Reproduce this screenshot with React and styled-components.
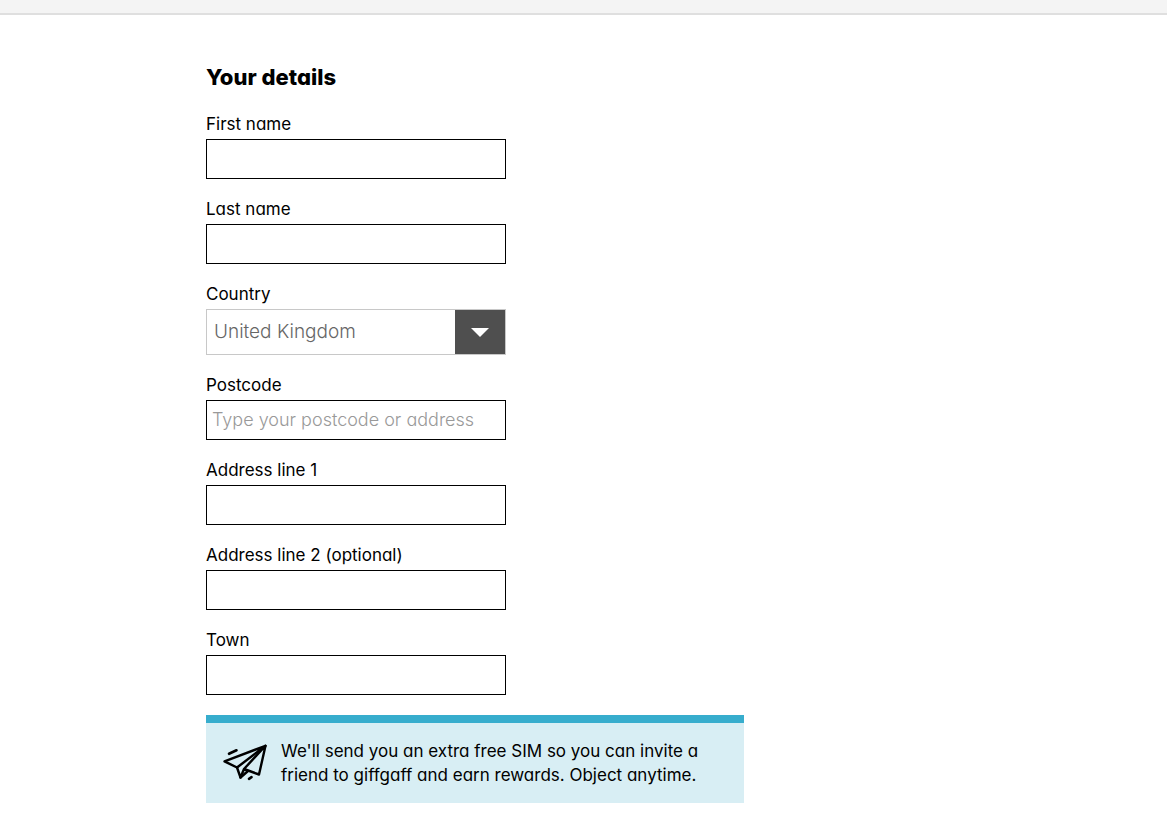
import React, { useState } from 'react';
import styled, { createGlobalStyle } from 'styled-components';

const Colors = {
  text: '#000',
  strip: '#f4f4f4',
  stripBorder: '#dfdfdf',
  selectBorder: '#c8c8c8',
  selectText: '#666',
  selectButton: '#4f4f4f',
  placeholder: '#999',
  noticeBg: '#d8eef4',
  noticeBar: '#37adcd',
};

const GlobalStyle = createGlobalStyle`
  *,
  *::before,
  *::after {
    box-sizing: border-box;
  }

  body {
    margin: 0;
    background-color: #fff;
    color: ${Colors.text};
    font-family: Inter, 'Liberation Sans', sans-serif;
    font-feature-settings: 'cv11';
    font-size: 17px;
    font-weight: 400;
    line-height: 24px;
  }
`;

const TopStrip = styled.header`
  height: 15px;
  background-color: ${Colors.strip};
  border-bottom: 2px solid ${Colors.stripBorder};
`;

const Page = styled.main`
  max-width: 755px;
  margin: 0 auto;
  padding: 48px 0 16px;
`;

const Title = styled.h1`
  margin: 0 0 21px;
  font-size: 22px;
  line-height: 28px;
  font-weight: 800;
`;

const Form = styled.form`
  display: flex;
  flex-direction: column;
  gap: 18px;
`;

const Field = styled.div`
  display: flex;
  flex-direction: column;
  gap: 3px;
  width: 100%;
  max-width: 300px;
`;

const Label = styled.label`
  align-self: flex-start;
`;

const TextInput = styled.input`
  width: 100%;
  height: 40px;
  padding: 0 5px 2px;
  border: 1px solid ${Colors.text};
  border-radius: 0;
  background-color: #fff;
  color: ${Colors.text};
  font-family: inherit;
  font-feature-settings: inherit;
  font-size: 18px;
  font-weight: 300;

  &::placeholder {
    color: ${Colors.placeholder};
    opacity: 1;
  }
`;

const SelectBox = styled.div`
  display: grid;
  grid-template-columns: 1fr 50px;
  height: 46px;
  border: 1px solid ${Colors.selectBorder};
`;

const Select = styled.select`
  grid-area: 1 / 1 / 2 / 3;
  appearance: none;
  width: 100%;
  padding: 0 58px 2px 7px;
  border: none;
  border-radius: 0;
  background-color: #fff;
  color: ${Colors.selectText};
  font-family: inherit;
  font-feature-settings: inherit;
  font-size: 19px;
  font-weight: 300;
`;

const SelectArrow = styled.span`
  grid-area: 1 / 2;
  display: flex;
  align-items: center;
  justify-content: center;
  background-color: ${Colors.selectButton};
  pointer-events: none;
  z-index: 1;
`;

const Notice = styled.aside`
  display: flex;
  align-items: flex-start;
  gap: 14px;
  max-width: 538px;
  margin-top: 20px;
  padding: 16px 40px 16px 17px;
  border-top: 8px solid ${Colors.noticeBar};
  background-color: ${Colors.noticeBg};

  svg {
    flex-shrink: 0;
    margin-top: 4px;
  }

  p {
    margin: 0;
  }
`;

const PaperPlane = () => (
  <svg
    width="44"
    height="38"
    viewBox="0 0 44 38"
    fill="none"
    stroke="#000"
    strokeWidth="2.4"
    strokeLinecap="round"
    strokeLinejoin="round"
    aria-hidden="true"
  >
    <path d="M42.5 2.8 L1.5 18.3 L14 24.5 Z" />
    <path d="M14 24.5 L17.5 34.5 L21 26 L42.5 2.8 L36 31.5 L21 26" />
    <path d="M17.5 34.5 L25 28" />
    <path d="M6 10.8 L13.5 7.3" strokeWidth="2.6" />
    <path d="M26 35.8 L28.5 34.2" strokeWidth="2.6" />
  </svg>
);

const fields = [
  { id: 'firstName', label: 'First name' },
  { id: 'lastName', label: 'Last name' },
  { id: 'country', label: 'Country', options: ['United Kingdom'] },
  { id: 'postcode', label: 'Postcode', placeholder: 'Type your postcode or address' },
  { id: 'address1', label: 'Address line 1' },
  { id: 'address2', label: 'Address line 2 (optional)' },
  { id: 'town', label: 'Town' },
];

const App = () => {
  const [values, setValues] = useState({ country: 'United Kingdom' });

  const handleChange = (e) => {
    setValues({ ...values, [e.target.id]: e.target.value });
  };

  return (
    <>
      <GlobalStyle />
      <TopStrip />
      <Page>
        <Title>Your details</Title>
        <Form>
          {fields.map((field) => (
            <Field key={field.id}>
              <Label htmlFor={field.id}>{field.label}</Label>
              {field.options ? (
                <SelectBox>
                  <Select id={field.id} value={values[field.id]} onChange={handleChange}>
                    {field.options.map((option) => (
                      <option key={option}>{option}</option>
                    ))}
                  </Select>
                  <SelectArrow>
                    <svg width="18" height="9" viewBox="0 0 18 9" aria-hidden="true">
                      <path d="M0 0 H18 L9 9 Z" fill="#fff" />
                    </svg>
                  </SelectArrow>
                </SelectBox>
              ) : (
                <TextInput
                  id={field.id}
                  type="text"
                  placeholder={field.placeholder}
                  value={values[field.id] || ''}
                  onChange={handleChange}
                />
              )}
            </Field>
          ))}
        </Form>
        <Notice>
          <PaperPlane />
          <p>We'll send you an extra free SIM so you can invite a friend to giffgaff and earn rewards. Object anytime.</p>
        </Notice>
      </Page>
    </>
  );
};

export default App;
